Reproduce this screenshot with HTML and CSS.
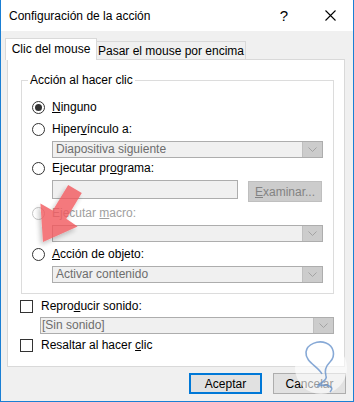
FILE: index.html
```html
<!DOCTYPE html>
<html lang="es">
<head>
<meta charset="utf-8">
<title>Configuración de la acción</title>
<link rel="stylesheet" href="styles.css">
</head>
<body>
<div class="window">
  <div class="titlebar">
    <span class="title">Configuración de la acción</span>
    <span class="cap help">?</span>
    <span class="cap close"><svg width="11" height="11" viewBox="0 0 11 11"><path d="M0.5 0.5 L10.5 10.5 M10.5 0.5 L0.5 10.5" stroke="#000" stroke-width="1.1" fill="none"/></svg></span>
  </div>
  <div class="body">
    <div class="tabs">
      <div class="tab active">Clic del mouse</div>
      <div class="tab inactive">Pasar el mouse por encima</div>
    </div>
    <div class="panel">
      <div class="group">
        <span class="legend">Acción al hacer clic</span>
        <div class="row r1"><span class="radio checked"></span><span><u>N</u>inguno</span></div>
        <div class="row r2"><span class="radio"></span><span>Hiper<u>v</u>ínculo a:</span></div>
        <div class="select indent"><span class="sel-text">Diapositiva siguiente</span><span class="sel-btn"><svg width="9" height="5" viewBox="0 0 9 5"><path d="M0.5 0.5 L4.5 4.5 L8.5 0.5" stroke="#a3a3a3" fill="none"/></svg></span></div>
        <div class="row"><span class="radio"></span><span>Ejecutar pr<u>o</u>grama:</span></div>
        <div class="fieldrow indent">
          <span class="field"></span>
          <span class="browse"><u>E</u>xaminar...</span>
        </div>
        <div class="row r5 disabled"><span class="radio"></span><span>Ejecutar <u>m</u>acro:</span></div>
        <div class="select indent"><span class="sel-text"></span><span class="sel-btn"><svg width="9" height="5" viewBox="0 0 9 5"><path d="M0.5 0.5 L4.5 4.5 L8.5 0.5" stroke="#a3a3a3" fill="none"/></svg></span></div>
        <div class="row r6"><span class="radio"></span><span><u>A</u>cción de objeto:</span></div>
        <div class="select indent"><span class="sel-text">Activar contenido</span><span class="sel-btn"><svg width="9" height="5" viewBox="0 0 9 5"><path d="M0.5 0.5 L4.5 4.5 L8.5 0.5" stroke="#a3a3a3" fill="none"/></svg></span></div>
      </div>
      <div class="row chk c1"><span class="checkbox"></span><span>Repro<u>d</u>ucir sonido:</span></div>
      <div class="select sound"><span class="sel-text">[Sin sonido]</span><span class="sel-btn"><svg width="9" height="5" viewBox="0 0 9 5"><path d="M0.5 0.5 L4.5 4.5 L8.5 0.5" stroke="#a3a3a3" fill="none"/></svg></span></div>
      <div class="row chk c2"><span class="checkbox"></span><span>Resaltar al hacer <u>c</u>lic</span></div>
    </div>
    <div class="buttons">
      <span class="btn default">Aceptar</span>
      <span class="btn">Cancelar</span>
    </div>
  </div>
  <svg class="arrow" width="354" height="402" viewBox="0 0 354 402">
    <defs>
      <filter id="sh" x="-30%" y="-30%" width="160%" height="160%">
        <feGaussianBlur in="SourceAlpha" stdDeviation="2.5"/>
        <feOffset dx="-2" dy="3" result="b"/>
        <feComponentTransfer><feFuncA type="linear" slope="0.3"/></feComponentTransfer>
        <feMerge><feMergeNode/><feMergeNode in="SourceGraphic"/></feMerge>
      </filter>
    </defs>
    <polygon points="68.2,184.9 81.8,193.1 66.3,218.8 77.6,226.5 43,242 40.4,203.4 52.7,210.6" fill="#f2585d" opacity="0.8" filter="url(#sh)"/>
  </svg>
  <svg class="watermark" width="354" height="402" viewBox="0 0 354 402">
    <circle cx="321" cy="368" r="26" fill="#ffffff" opacity="0.6"/>
    <path d="M322 374 C318 366 305 362 306 352 C307 344 318 340 326 343 C334 346 336 356 330 362 C326 366 324 370 326 376 C328 381 320 382 318 386 C326 384 336 386 330 392" stroke="#5f8cc8" stroke-width="1.6" fill="none" opacity="0.75"/>
  </svg>
</div>
</body>
</html>
```

FILE: styles.css
```css
* { box-sizing: border-box; }
html, body { margin: 0; padding: 0; }
body {
  font-family: "Liberation Sans", Arial, sans-serif;
  font-size: 12px;
  color: #000;
  background: #fff;
}
u { text-decoration: underline; text-underline-offset: 1px; }

.window {
  position: relative;
  width: 354px;
  height: 402px;
  border-left: 1px solid #1a7fd4;
  border-right: 1px solid #1a7fd4;
  border-bottom: 1px solid #1a7fd4;
  display: flex;
  flex-direction: column;
  overflow: hidden;
}

.titlebar {
  height: 31px;
  background: #fff;
  display: flex;
  align-items: center;
  padding-left: 8px;
  flex-shrink: 0;
}
.title { font-size: 12px; flex: 1; }
.cap {
  width: 46px;
  height: 31px;
  display: flex;
  align-items: center;
  justify-content: center;
}
.help { font-size: 15px; font-family: "Liberation Sans", Arial, sans-serif; padding-bottom: 1px; }

.body {
  flex: 1;
  background: #f0f0f0;
  display: flex;
  flex-direction: column;
}

.tabs {
  margin-top: 7px;
  padding-left: 4px;
  height: 21px;
  display: flex;
  align-items: flex-end;
}
.tab {
  border: 1px solid #d9d9d9;
  border-bottom: none;
  display: flex;
  align-items: center;
  justify-content: center;
}
.tab.active {
  position: relative;
  z-index: 1;
  width: 92px;
  height: 22px;
  margin-bottom: -1px;
  background: #fff;
  padding-bottom: 2px;
}
.tab.inactive {
  width: 149px;
  height: 18px;
  border-left: none;
  background: #f0f0f0;
  padding-top: 1px;
}

.panel {
  margin-left: 6px;
  width: 338px;
  height: 308px;
  border: 1px solid #d9d9d9;
  background: #fff;
  padding-top: 20px;
  padding-left: 12px;
}

.group {
  position: relative;
  margin-left: 1px;
  width: 313px;
  border: 1px solid #dcdcdc;
  padding: 16px 0 10px 10px;
}
.legend {
  position: absolute;
  top: -8px;
  left: 6px;
  background: #fff;
  padding: 0 2px;
  line-height: 15px;
}

.row {
  height: 20px;
  display: flex;
  align-items: center;
}
.row.r1 { margin-bottom: 2px; }
.row.r5 { margin-top: 1px; }
.row.r6 { margin-top: 2px; }
.radio {
  width: 13px;
  height: 13px;
  border: 1px solid #333;
  border-radius: 50%;
  background: #fff;
  margin-right: 7px;
  display: flex;
  align-items: center;
  justify-content: center;
  flex-shrink: 0;
}
.radio.checked::after {
  content: "";
  width: 7px;
  height: 7px;
  border-radius: 50%;
  background: #333;
}
.disabled { color: #a0a0a0; }
.disabled .radio { border-color: #c4c4c4; }

.indent { margin-left: 20px; }

.select {
  margin-top: 2px;
  width: 271px;
  height: 17px;
  border: 1px solid #adadad;
  background: #f0f0f0;
  display: flex;
  align-items: stretch;
}
.sel-text {
  flex: 1;
  color: #6d6d6d;
  padding-left: 3px;
  line-height: 15px;
}
.sel-btn {
  width: 20px;
  background: #cccccc;
  border-left: 1px solid #bfbfbf;
  display: flex;
  align-items: center;
  justify-content: center;
}

.fieldrow {
  margin-top: 2px;
  height: 22px;
  display: flex;
  align-items: flex-start;
}
.field {
  width: 186px;
  height: 19px;
  border: 1px solid #adadad;
  background: #f0f0f0;
}
.browse {
  margin-left: 10px;
  margin-top: 1px;
  width: 74px;
  height: 21px;
  background: #cccccc;
  border: 1px solid #bfbfbf;
  color: #838383;
  display: flex;
  align-items: center;
  justify-content: center;
}

.chk { margin-left: 0; }
.row.c1 { margin-top: 2px; }
.row.c2 { margin-top: 1px; }
.checkbox {
  width: 13px;
  height: 13px;
  border: 1px solid #333;
  background: #fff;
  margin-right: 8px;
  flex-shrink: 0;
}
.select.sound {
  margin-top: 1px;
  margin-left: 20px;
  width: 294px;
}
.select.sound .sel-text { padding-left: 1px; }

.buttons {
  margin-top: 6px;
  padding-right: 7px;
  display: flex;
  justify-content: flex-end;
  gap: 11px;
}
.btn {
  width: 73px;
  height: 21px;
  background: #e1e1e1;
  border: 1px solid #adadad;
  display: flex;
  align-items: center;
  justify-content: center;
}
.btn.default { border: 2px solid #0078d7; }

.arrow, .watermark {
  position: absolute;
  left: -1px;
  top: 0;
  pointer-events: none;
}
```
